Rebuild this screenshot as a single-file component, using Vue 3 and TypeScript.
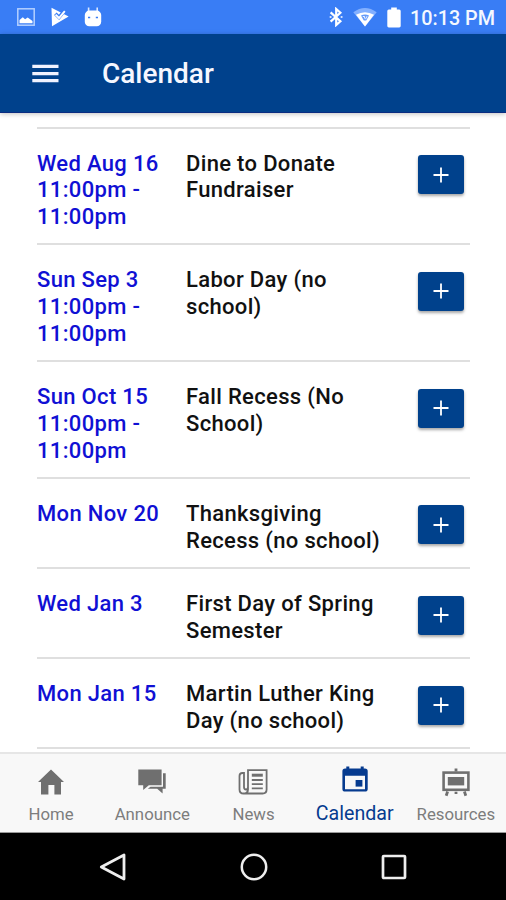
<script setup lang="ts">
interface CalendarEvent {
  day: string
  time?: string
  title: string[]
}

interface Tab {
  name: string
  icon: string
  active?: boolean
}

const lateEvening = '11:00pm - 11:00pm'

const events: CalendarEvent[] = [
  { day: 'Wed Aug 16', time: lateEvening, title: ['Dine to Donate', 'Fundraiser'] },
  { day: 'Sun Sep 3', time: lateEvening, title: ['Labor Day (no', 'school)'] },
  { day: 'Sun Oct 15', time: lateEvening, title: ['Fall Recess (No', 'School)'] },
  { day: 'Mon Nov 20', title: ['Thanksgiving', 'Recess (no school)'] },
  { day: 'Wed Jan 3', title: ['First Day of Spring', 'Semester'] },
  { day: 'Mon Jan 15', title: ['Martin Luther King', 'Day (no school)'] },
]

const tabs: Tab[] = [
  { name: 'Home', icon: 'home' },
  { name: 'Announce', icon: 'chat' },
  { name: 'News', icon: 'news' },
  { name: 'Calendar', icon: 'calendar', active: true },
  { name: 'Resources', icon: 'easel' },
]
</script>

<template>
  <div class="screen">
    <div class="status">
      <div class="notices">
        <svg width="18" height="18" viewBox="0 0 18 18">
          <rect x="0.8" y="0.8" width="16.4" height="16.4" fill="none" stroke="#b4d0ff" stroke-width="1.5" />
          <path d="M2.5 15.3v-3.4l3.3-2.6 2.3 2 2.6-1.7 4.8 3.3v2.4z" fill="#fff" />
        </svg>
        <svg width="18" height="20" viewBox="0 0 18 20">
          <path d="M0.5 0.8 17.6 9.5 1 19.3z" fill="#fff" />
          <path d="M4.3 6.8 8 10.4 13.3 3.9" fill="none" stroke="#397df5" stroke-width="3.6" />
          <path d="M4.6 7.6 8 11 13.8 4.2" fill="none" stroke="#fff" stroke-width="1.9" />
        </svg>
        <svg width="18" height="20" viewBox="0 0 18 20">
          <path d="M4.6 0.5v5M13.2 0.5v5" stroke="#dce8ff" stroke-width="1.6" />
          <rect x="0.8" y="3.6" width="16.4" height="15.6" rx="4.5" fill="#fff" />
          <path d="M4 10.5h2.2M11.8 10.5h2.2" stroke="#397df5" stroke-width="1.6" />
        </svg>
      </div>
      <div class="system">
        <svg width="14" height="20" viewBox="0 0 14 20">
          <path d="M1.6 5.4 11.4 14.2 7.2 18V2l4.2 3.8L1.6 14.6" fill="none" stroke="#fff" stroke-width="2.2" />
          <circle cx="1.6" cy="10" r="1.1" fill="#dce8ff" />
          <circle cx="12.6" cy="10" r="1.1" fill="#dce8ff" />
        </svg>
        <svg class="wifi" width="24" height="20" viewBox="0 0 24 20">
          <path d="M0.3 5.2Q12-3.4 23.7 5.2L12 19.4z" fill="#83b0ff" />
          <path d="M3 7.8Q12 2.8 21 7.8L12 19.4z" fill="#fff" />
          <path d="M8 8.6q4-2 8 0l-2.8 4.8h-2.4z" fill="#659bfb" />
          <path d="M9.8 9.5h1.8v2M14 9.2l-1.5 3" fill="none" stroke="#fff" stroke-width="0.9" />
        </svg>
        <svg class="battery" width="14" height="21" viewBox="0 0 14 21">
          <path d="M4.2 0.5h5.6v2h2.4q1.5 0 1.5 1.5v15q0 1.4-1.5 1.4H1.8Q.3 20.4.3 19V4q0-1.5 1.5-1.5h2.4z" fill="#fff" />
        </svg>
        <span class="clock">10:13 PM</span>
      </div>
    </div>

    <header class="toolbar">
      <svg width="27" height="19" viewBox="0 0 27 19">
        <path d="M0.3 2.4h26.2M0.3 9.6h26.2M0.3 16.7h26.2" stroke="#f0f2ff" stroke-width="3.2" />
      </svg>
      <h1>Calendar</h1>
    </header>

    <main class="events">
      <article v-for="event in events" :key="event.day" class="event">
        <div class="when">
          <div>{{ event.day }}</div>
          <div v-if="event.time">{{ event.time }}</div>
        </div>
        <div class="title">
          <div v-for="line in event.title" :key="line">{{ line }}</div>
        </div>
        <button class="add" type="button">
          <svg width="16" height="16" viewBox="0 0 16 16">
            <path d="M8 0.5v15M0.5 8h15" stroke="#fff" stroke-width="1.8" />
          </svg>
        </button>
      </article>
    </main>

    <nav class="tabs">
      <div v-for="tab in tabs" :key="tab.name" class="tab" :class="{ active: tab.active }">
        <svg v-if="tab.icon === 'home'" width="30" height="32" viewBox="0 0 30 32">
          <path d="M15 3.5 28 16h-3v12.6h-6.6V19h-6v9.6H5V16H2z" fill="currentColor" />
        </svg>
        <svg v-else-if="tab.icon === 'chat'" width="30" height="32" viewBox="0 0 30 32">
          <path d="M1.3 3.4h23.3v15.8H11.8L6.2 24v-4.8H1.3z" fill="currentColor" />
          <path d="M26 7.2h2.7v15.6h-3.1v4.7l-5.4-4.7h-9.4l2.7-2.1H26z" fill="currentColor" />
        </svg>
        <svg v-else-if="tab.icon === 'news'" width="30" height="32" viewBox="0 0 30 32">
          <g fill="none" stroke="currentColor">
            <path d="M10 21V4.2h18.6v19.3q0 4-4 4H5.5q-4 0-4-4V10q0-3 3-3H6v14q0 2.5 2 2.5t2-2.5v2.5q0 4-4.5 4" stroke-width="1.8" />
            <path d="M13.8 9.2h11" stroke-width="3" />
            <path d="M13.8 14h11M13.8 18.2h11M13.8 22.4h11" stroke-width="1.8" />
          </g>
        </svg>
        <svg v-else-if="tab.icon === 'calendar'" width="30" height="32" viewBox="0 0 30 32">
          <path fill-rule="evenodd" d="M6.3 0.4h3v2.2h11.4V.4h3v2.2h1.2q2.8 0 2.8 2.7v17.6q0 2.7-2.8 2.7H5.2q-2.8 0-2.8-2.7V5.3q0-2.7 2.8-2.7h1.1zM5 9.8v13.5h20V9.8z" fill="currentColor" />
          <rect x="15.6" y="14" width="6.8" height="6.6" fill="currentColor" />
        </svg>
        <svg v-else width="30" height="32" viewBox="0 0 30 32">
          <g fill="none" stroke="currentColor">
            <rect x="2.6" y="6.6" width="24.8" height="17.2" stroke-width="2.6" />
            <path d="M15 2.6v3M15 25.7v2.2M6.6 25.5l-1.4 4.3M23.4 25.5l1.4 4.3" stroke-width="2.8" />
          </g>
          <rect x="6.8" y="11" width="16.4" height="8.4" fill="currentColor" />
        </svg>
        <span>{{ tab.name }}</span>
      </div>
    </nav>

    <div class="softkeys">
      <svg width="28" height="30" viewBox="0 0 28 30">
        <path d="M25 3v24L2.3 15z" fill="none" stroke="#eee" stroke-width="2.8" stroke-linejoin="round" />
      </svg>
      <svg width="30" height="30" viewBox="0 0 30 30">
        <circle cx="15" cy="15" r="12.2" fill="none" stroke="#eee" stroke-width="2.5" />
      </svg>
      <svg width="28" height="30" viewBox="0 0 28 30">
        <rect x="3" y="4" width="22" height="22" rx="0.8" fill="none" stroke="#eee" stroke-width="2.7" />
      </svg>
    </div>
  </div>
</template>

<style>
body {
  margin: 0;
}
</style>

<style scoped>
.screen {
  width: 506px;
  height: 900px;
  display: flex;
  flex-direction: column;
  overflow: hidden;
  background: #fff;
  font-family: Roboto, sans-serif;
}

.status {
  height: 34px;
  flex: none;
  box-sizing: border-box;
  display: flex;
  justify-content: space-between;
  align-items: center;
  padding: 0 11px 0 17px;
  background: #397df5;
}

.notices {
  display: flex;
  align-items: center;
  gap: 15.5px;
}

.system {
  display: flex;
  align-items: center;
}

.wifi {
  margin-left: 10px;
}

.battery {
  margin: 0 9px 0 10.5px;
}

.clock {
  width: 85px;
  font-size: 19.8px;
  font-weight: 500;
  line-height: 24px;
  white-space: nowrap;
  color: #f3f8ff;
  padding-top: 3px;
}

.toolbar {
  height: 79px;
  flex: none;
  display: flex;
  align-items: center;
  gap: 43px;
  padding-left: 32px;
  background: #00418c;
  border-bottom: 1px solid #0a2b80;
  box-sizing: border-box;
  box-shadow: 0 1px 5px rgba(0, 0, 0, 0.25);
}

h1 {
  margin: 0;
  padding-top: 1px;
  color: #f6f7ff;
  font-size: 28px;
  line-height: 34px;
  font-weight: 500;
}

.events {
  flex: 1;
  min-height: 0;
  overflow: hidden;
  padding: 13.7px 36px 0 37px;
}

.event {
  display: flex;
  align-items: flex-start;
  box-sizing: border-box;
  padding: 22px 0 12.8px;
  border-top: 2px solid #dfdfdf;
  font-size: 22px;
  font-weight: 500;
  line-height: 26.65px;
  letter-spacing: 0.33px;
}

.event:last-child {
  border-bottom: 2px solid #dfdfdf;
}

.when {
  width: 125px;
  margin-right: 24px;
  color: #1010d4;
}

.title {
  flex: 1;
  white-space: nowrap;
  color: #111;
}

.add {
  width: 46px;
  height: 39px;
  margin: 4.5px 6px 0 0;
  padding: 0;
  display: flex;
  align-items: center;
  justify-content: center;
  border: 0;
  border-radius: 3px;
  background: #00418c;
  box-shadow: 0 2px 3px rgba(0, 0, 0, 0.35);
}

.tabs {
  height: 81px;
  flex: none;
  box-sizing: border-box;
  display: grid;
  grid-template-columns: repeat(5, 1fr);
  border-top: 2px solid #e6e6e6;
  border-bottom: 1px solid #999;
  background: #f8f8f8;
}

.tab {
  display: flex;
  flex-direction: column;
  align-items: center;
  padding: 12px 0 0 1px;
  color: #6f6f6f;
  font-size: 16.8px;
  line-height: 22px;
}

.tab span {
  margin-top: 5px;
  color: #7d7d7d;
}

.tab.active,
.tab.active span {
  color: #063b8f;
}

.tab.active span {
  margin-top: 5px;
  font-size: 19.6px;
}

.softkeys {
  height: 67px;
  flex: none;
  box-sizing: border-box;
  display: flex;
  justify-content: space-between;
  align-items: center;
  padding: 0 98px 0 99px;
  background: #000;
}
</style>
